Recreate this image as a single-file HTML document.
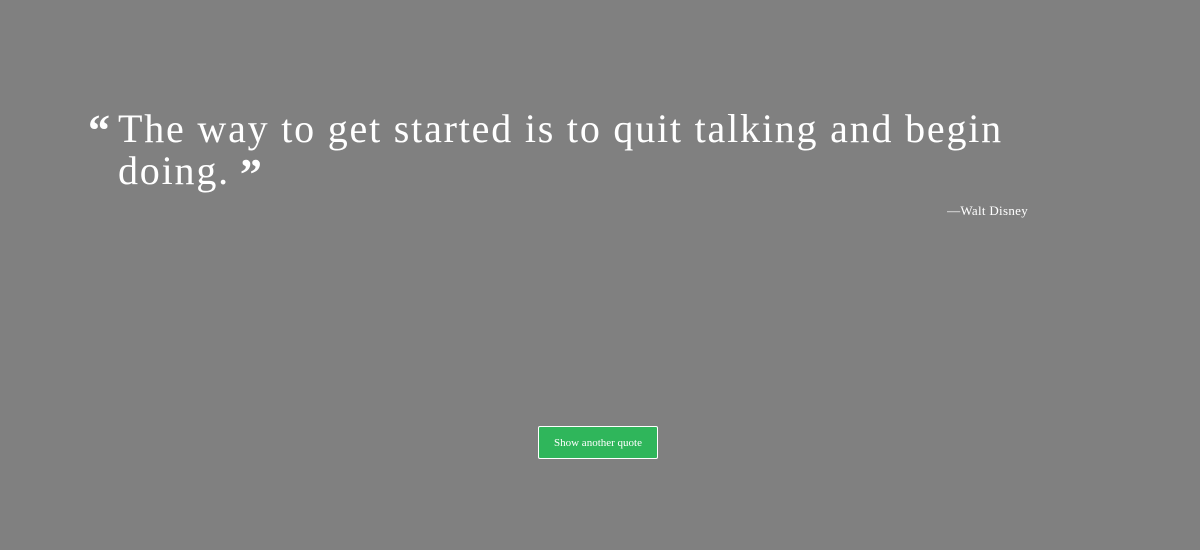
<!DOCTYPE html>
<html><head><style>
html,body{margin:0;padding:0;width:1200px;height:550px;background:#808080;overflow:hidden;font-family:"Liberation Serif",serif;color:#fff}
.q{position:absolute;left:118px;top:108px;width:940px;font-size:40px;line-height:42px;letter-spacing:1.8px}
.lq{position:absolute;left:-30px;top:2px;font-size:44px;font-weight:bold;letter-spacing:0}
.rq{font-size:44px;font-weight:bold;vertical-align:top;position:relative;top:4px;margin-left:10px;letter-spacing:0}
.a{position:absolute;right:172px;top:203px;font-size:13px;letter-spacing:0.3px}
.b{position:absolute;left:538px;top:426px;width:118px;height:31px;background:#2fb65b;border:1px solid #fff;border-radius:2px;font-size:11px;line-height:32px;text-align:center;color:#fff}
</style></head><body>
<div class="q"><span class="lq">“</span>The way to get started is to quit talking and begin doing.<span class="rq">”</span></div>
<div class="a">—Walt Disney</div>
<div class="b">Show another quote</div>
</body></html>
